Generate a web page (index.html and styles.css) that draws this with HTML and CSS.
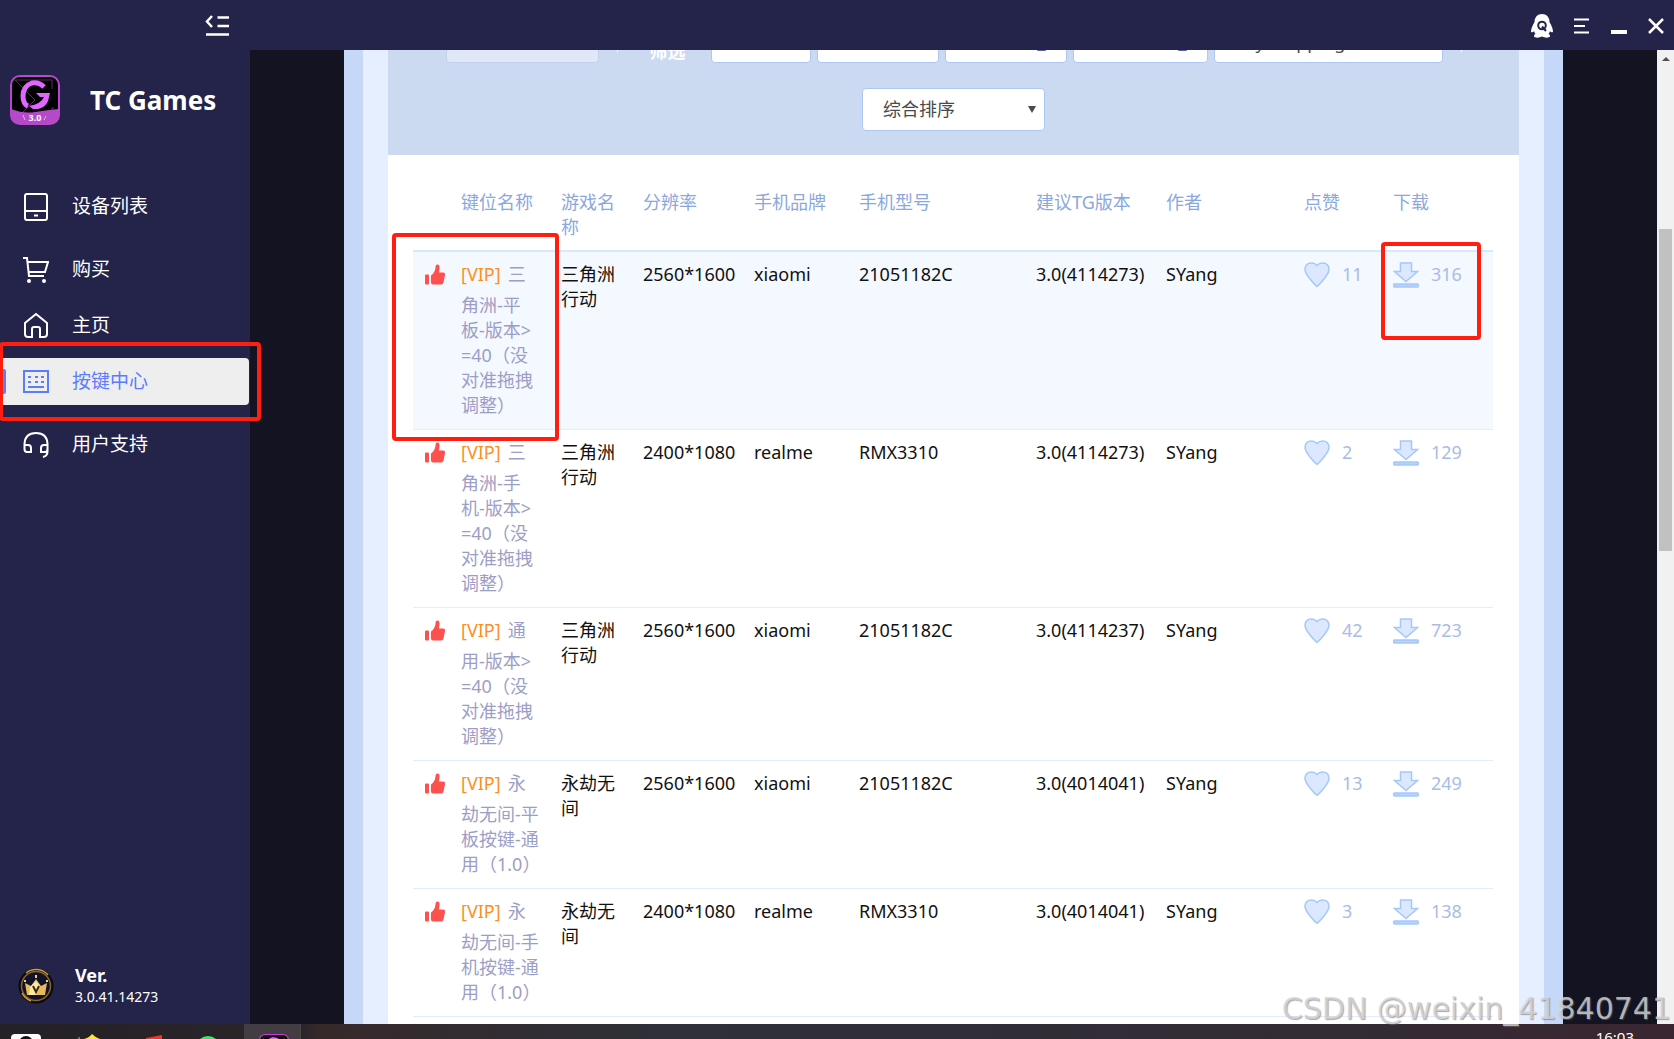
FILE: index.html
```html
<!DOCTYPE html>
<html lang="zh-CN">
<head>
    <meta charset="UTF-8">
    <meta name="viewport" content="width=device-width, initial-scale=1.0">
    <title>TC Games</title>
    <link rel="stylesheet" href="styles.css">
</head>
<body>
    <svg class="sprite" aria-hidden="true">
        <symbol id="thumb" viewBox="0 0 22 22">
            <rect x="1" y="11" width="4" height="10" rx="1"/>
            <path d="M7 12 Q11 9 11.500 4 Q11.500 1 13.500 1 Q16 1 15.500 5 L15 9 H19 Q21.500 9 21 11.500 L19.500 19 Q19 21 17 21 H9 Q7 21 7 19 Z"/>
        </symbol>
        <symbol id="heart" viewBox="0 0 26 26">
            <path d="M13 24.500 Q11 23 6 17 Q.8 10.500 1 7 Q1.500 1 7.500 1 Q11 1 13 3.500 Q15 1 18.500 1 Q24.500 1 25 7 Q25.200 10.500 20 17 Q15 23 13 24.500 Z"/>
        </symbol>
        <symbol id="download" viewBox="0 0 26 26">
            <path d="M7.500 1 H18.500 V9.500 H24.500 L13 19.500 L1.500 9.500 H7.500 Z"/>
            <rect class="tray" x=".7" y="22" width="24.600" height="3" rx="1"/>
        </symbol>
        <symbol id="logo" viewBox="0 0 50 50">
            <rect x="1" y="1" width="48" height="48" rx="9" fill="#000"/>
            <path d="M5 5 H42 V14 M5 5 L25 25 L12 38 M42 38 V33 H44" stroke="#5b2a66" fill="none"/>
            <path d="M1 34 Q14 39 25 37 Q38 35 49 34 V40 Q49 49 40 49 H10 Q1 49 1 40 Z" fill="#b44ac8"/>
            <path d="M34 12 Q29 7 22 8 Q13 11 13 21 Q13 29 18 31" fill="none" stroke="#e066ff" stroke-width="5"/>
            <path d="M40 18 H26 L30 22 H34 Q31 29 19 31 L23 34 Q37 35 39 22 Z" fill="#e066ff"/>
            <rect x="1" y="1" width="48" height="48" rx="9" fill="none" stroke="#b947cc" stroke-width="2"/>
            <text x="25" y="46" class="logo-text">3.0</text>
            <path d="M13 40 L15 45 M36 41 L34 45" stroke="#e9a5f5"/>
        </symbol>
    </svg>

    <header class="titlebar">
        <button class="icon-btn collapse" aria-label="收起菜单">
            <svg width="24" height="22" viewBox="0 0 24 22"><path d="M7 1 L2 6.500 L7 12 M12.500 2.500 H24 M12.500 11 H24 M1 19.500 H24"/></svg>
        </button>
        <div class="window-controls">
            <button class="icon-btn" aria-label="QQ">
                <svg width="22" height="24" viewBox="0 0 22 24">
                    <path class="solid" d="M11 0 Q18 0 18.500 8 Q22 14 22 18 Q20 19 19 17 Q18.500 19 17.500 20 Q20 21 18.500 23 Q15 24.500 11 22.500 Q7 24.500 3.500 23 Q2 21 4.500 20 Q3.500 19 3 17 Q2 19 0 18 Q0 14 3.500 8 Q4 0 11 0 Z"/>
                    <circle class="q" cx="11" cy="11.500" r="3.800"/><path class="q" d="M11 12.500 L15 17"/>
                </svg>
            </button>
            <button class="icon-btn" aria-label="菜单">
                <svg width="16" height="16" viewBox="0 0 16 16"><path class="thin" d="M0 1.500 H15 M0 8 H11 M0 14.500 H15"/></svg>
            </button>
            <button class="icon-btn" aria-label="最小化">
                <svg width="16" height="16" viewBox="0 0 16 16"><path class="solid" d="M0 12 H16 V16 H0 Z"/></svg>
            </button>
            <button class="icon-btn" aria-label="关闭">
                <svg width="16" height="16" viewBox="0 0 16 16"><path d="M1 1 L15 15 M15 1 L1 15"/></svg>
            </button>
        </div>
    </header>

    <div class="window">
        <aside class="sidebar">
            <div class="brand">
                <svg width="50" height="50"><use href="#logo"/></svg>
                <h1>TC Games</h1>
            </div>
            <nav class="menu">
                <a href="#" class="menu-item section-end">
                    <svg width="26" height="28" viewBox="0 0 26 28"><rect x="2" y="1" width="22" height="26" rx="2"/><path d="M2 18 H24 M11 22.500 H15"/></svg>
                    设备列表
                </a>
                <a href="#" class="menu-item">
                    <svg width="26" height="28" viewBox="0 0 26 28"><path d="M0 2 H4 L6 20 H21 M4.500 6 H25 L22 16 H6"/><circle class="dot" cx="6" cy="25" r="2"/><circle class="dot" cx="21" cy="25" r="2"/></svg>
                    购买
                </a>
                <a href="#" class="menu-item">
                    <svg width="26" height="28" viewBox="0 0 26 28"><path d="M13 2 L24 11 V22 Q24 25 21 25 H17 V17 Q17 15 15 15 H11 Q9 15 9 17 V25 H5 Q2 25 2 22 V11 Z"/></svg>
                    主页
                </a>
                <a href="#" class="menu-item active section-end">
                    <svg width="26" height="28" viewBox="0 0 26 28"><rect x="1" y="3" width="24" height="21"/><path d="M5 9 H8 M12 9 H15 M18 9 H21 M5 14 H8 M12 14 H15 M18 14 H21 M5 19 H21"/></svg>
                    按键中心
                </a>
                <a href="#" class="menu-item">
                    <svg width="26" height="28" viewBox="0 0 26 28"><path d="M1.500 16 V13 Q2 2 13 2 Q24 2 24.500 13 V19 Q25 25 20 26 M1.500 14 H5 Q8 14 8 17 V21 H4 Q1.500 21 1.500 18 Z M24.500 14 H21 Q18 14 18 17 V21 H22 Q24.500 21 24.500 18"/></svg>
                    用户支持
                </a>
            </nav>
            <div class="version">
                <svg width="36" height="36" viewBox="0 0 36 36">
                    <circle cx="18" cy="18" r="17.500" fill="#0b0a12"/>
                    <circle cx="18" cy="18" r="14.500" fill="#12122b" stroke="#8c6727" stroke-width="1.500"/>
                    <path d="M8 5 A16 16 0 0 1 30 7 M4 25 A16 16 0 0 0 13 33" fill="none" stroke="#d29b40" stroke-width="1.500"/>
                    <path d="M7 15 L13 18 L18 11 L23 18 L29 15 L27 27 H9 Z" fill="#e9b95b"/>
                    <path d="M12 19 L18 13 L22 18 L18 27 H11 Z" fill="#ffe9a3"/>
                    <path d="M15 18 L18 24 L21 18" fill="none" stroke="#3b2a16" stroke-width="2"/>
                    <path d="M7 12 V14 M18 7 V10 M29 12 V14" stroke="#f4cd72" stroke-width="2"/>
                </svg>
                <div>
                    <strong>Ver.</strong>
                    <span>3.0.41.14273</span>
                </div>
            </div>
        </aside>

        <main class="viewport">
            <div class="outer">
                <div class="inner">
                    <div class="filters">
                        <div class="filter-row">
                            <button class="field muted" disabled>通用键位选方式</button>
                            <span class="divider"></span>
                            <span class="filter-label">筛选</span>
                            <div class="filter-group">
                                <button class="field w-xs">VIP按键</button>
                                <button class="field w-sm">非VIP按键</button>
                                <button class="field w-sm spread">游戏名<i></i></button>
                                <button class="field w-md spread">手机型号<i></i></button>
                                <input class="field w-lg" type="text" value="Key mapping" aria-label="Key mapping">
                            </div>
                            <span class="divider"></span>
                        </div>
                        <div class="sort">
                            <select class="field" aria-label="排序">
                                <option>综合排序</option>
                            </select>
                        </div>
                    </div>

                    <div class="table-wrap">
                        <table class="keys">
                            <colgroup>
                                <col class="c-thumb"><col class="c-name"><col class="c-game"><col class="c-res"><col class="c-brand">
                                <col class="c-model"><col class="c-ver"><col class="c-author"><col class="c-like"><col class="c-down">
                            </colgroup>
                            <thead>
                                <tr>
                                    <th></th>
                                    <th>键位名称</th>
                                    <th>游戏名称</th>
                                    <th>分辨率</th>
                                    <th>手机品牌</th>
                                    <th>手机型号</th>
                                    <th>建议TG版本</th>
                                    <th>作者</th>
                                    <th>点赞</th>
                                    <th>下载</th>
                                </tr>
                            </thead>
                            <tbody>
                                <tr class="hover">
                                    <td><svg class="thumb"><use href="#thumb"/></svg></td>
                                    <td class="name"><span class="vip">[VIP]</span>三角洲-平板-版本&gt;=40（没对准拖拽调整）</td>
                                    <td>三角洲行动</td>
                                    <td>2560*1600</td>
                                    <td>xiaomi</td>
                                    <td>21051182C</td>
                                    <td>3.0(4114273)</td>
                                    <td>SYang</td>
                                    <td><span class="count"><svg><use href="#heart"/></svg>11</span></td>
                                    <td><span class="count"><svg><use href="#download"/></svg>316</span></td>
                                </tr>
                                <tr>
                                    <td><svg class="thumb"><use href="#thumb"/></svg></td>
                                    <td class="name"><span class="vip">[VIP]</span>三角洲-手机-版本&gt;=40（没对准拖拽调整）</td>
                                    <td>三角洲行动</td>
                                    <td>2400*1080</td>
                                    <td>realme</td>
                                    <td>RMX3310</td>
                                    <td>3.0(4114273)</td>
                                    <td>SYang</td>
                                    <td><span class="count"><svg><use href="#heart"/></svg>2</span></td>
                                    <td><span class="count"><svg><use href="#download"/></svg>129</span></td>
                                </tr>
                                <tr>
                                    <td><svg class="thumb"><use href="#thumb"/></svg></td>
                                    <td class="name"><span class="vip">[VIP]</span>通用-版本&gt;=40（没对准拖拽调整）</td>
                                    <td>三角洲行动</td>
                                    <td>2560*1600</td>
                                    <td>xiaomi</td>
                                    <td>21051182C</td>
                                    <td>3.0(4114237)</td>
                                    <td>SYang</td>
                                    <td><span class="count"><svg><use href="#heart"/></svg>42</span></td>
                                    <td><span class="count"><svg><use href="#download"/></svg>723</span></td>
                                </tr>
                                <tr>
                                    <td><svg class="thumb"><use href="#thumb"/></svg></td>
                                    <td class="name"><span class="vip">[VIP]</span>永劫无间-平板按键-通用（1.0）</td>
                                    <td>永劫无间</td>
                                    <td>2560*1600</td>
                                    <td>xiaomi</td>
                                    <td>21051182C</td>
                                    <td>3.0(4014041)</td>
                                    <td>SYang</td>
                                    <td><span class="count"><svg><use href="#heart"/></svg>13</span></td>
                                    <td><span class="count"><svg><use href="#download"/></svg>249</span></td>
                                </tr>
                                <tr>
                                    <td><svg class="thumb"><use href="#thumb"/></svg></td>
                                    <td class="name"><span class="vip">[VIP]</span>永劫无间-手机按键-通用（1.0）</td>
                                    <td>永劫无间</td>
                                    <td>2400*1080</td>
                                    <td>realme</td>
                                    <td>RMX3310</td>
                                    <td>3.0(4014041)</td>
                                    <td>SYang</td>
                                    <td><span class="count"><svg><use href="#heart"/></svg>3</span></td>
                                    <td><span class="count"><svg><use href="#download"/></svg>138</span></td>
                                </tr>
                            </tbody>
                        </table>
                    </div>
                </div>
            </div>
        </main>

        <div class="scrollbar">
            <span class="arrow"></span>
            <span class="handle"></span>
        </div>
    </div>

    <footer class="taskbar">
        <div class="apps">
            <svg width="56" height="15"><rect x="11" y="10" width="30" height="20" rx="4" fill="#fff"/><circle cx="26" cy="19" r="7" fill="#111"/></svg>
            <svg width="68" height="15"><path d="M21 14 L24 13 V15 Z" fill="#c98a1c"/><path d="M36 10 Q40 14 44 15 H28 Q33 14 36 10 Z" fill="#ffe23c"/></svg>
            <svg width="60" height="15"><path d="M22 14 L38 11 V15 H22 Z" fill="#f2332c"/></svg>
            <svg width="60" height="15"><circle cx="24" cy="24" r="12" fill="#42e36b"/></svg>
            <span class="app-active"><svg width="30" height="30"><use href="#logo"/></svg></span>
        </div>
        <time>16:03</time>
    </footer>

    <!-- highlights drawn over the window -->
    <div class="mark mark-menu"></div>
    <div class="mark mark-name"></div>
    <div class="mark mark-download"></div>
    <div class="watermark">CSDN @weixin_41840741</div>
</body>
</html>
```
FILE: styles.css
```css
* {
    box-sizing: border-box;
}

body {
    margin: 0;
    height: 100vh;
    display: flex;
    flex-direction: column;
    overflow: hidden;
    position: relative;
    background-color: #141321;
    font-family: "Noto Sans", "Noto Sans CJK SC", sans-serif;
    font-size: 18px;
    line-height: 25px;
}

button, input, select {
    font: inherit;
}

.sprite {
    position: absolute;
    width: 0;
    height: 0;
}

/* title bar */
.titlebar {
    flex: none;
    height: 50px;
    display: flex;
    align-items: center;
    justify-content: space-between;
    padding: 1px 10px 0 205px;
    background-color: #24234a;
}

.icon-btn {
    display: flex;
    padding: 0;
    border: 0;
    background: none;
    cursor: pointer;
}

.icon-btn path {
    fill: none;
    stroke: #fff;
    stroke-width: 2.5;
}

.icon-btn .thin {
    stroke-width: 2;
}

.icon-btn .solid {
    fill: #fff;
    stroke: none;
}

.icon-btn .q {
    fill: none;
    stroke: #24234a;
    stroke-width: 2;
}

.window-controls {
    display: flex;
    align-items: center;
    gap: 21px;
}

/* layout */
.window {
    flex: 1;
    min-height: 0;
    display: flex;
}

.sidebar {
    flex: none;
    width: 250px;
    display: flex;
    flex-direction: column;
    padding-top: 25px;
    background-color: #24234a;
    color: #fff;
}

.brand {
    display: flex;
    align-items: center;
    gap: 30px;
    padding-left: 10px;
}

.brand h1 {
    margin: 0;
    font-size: 26px;
    line-height: 50px;
}

.logo-text {
    fill: #fff;
    font-size: 9px;
    font-weight: bold;
    text-anchor: middle;
}

.menu {
    display: flex;
    flex-direction: column;
    gap: 9px;
    margin-top: 58px;
}

.menu-item {
    display: flex;
    align-items: center;
    gap: 23px;
    height: 47px;
    margin-right: 1px;
    padding-left: 23px;
    border-radius: 0 4px 4px 0;
    color: #fff;
    font-size: 19px;
    text-decoration: none;
}

.menu-item svg {
    fill: none;
    stroke: currentColor;
    stroke-width: 2;
}

.menu-item .dot {
    fill: currentColor;
    stroke: none;
}

.section-end {
    margin-bottom: 7px;
}

.menu-item.active {
    position: relative;
    background-color: #eee;
    color: #5b7cff;
}

.menu-item.active::before {
    content: "";
    position: absolute;
    left: 0;
    top: 11px;
    width: 6px;
    height: 25px;
    border-radius: 2px;
    background-color: #5b7cff;
}

.version {
    display: flex;
    align-items: center;
    gap: 21px;
    margin-top: auto;
    padding: 0 0 16px 18px;
}

.version strong,
.version span {
    display: block;
    line-height: 22px;
}

.version span {
    font-size: 14px;
}

.viewport {
    flex: 1;
    min-width: 0;
    padding: 0 94px;
    overflow: hidden;
}

.outer {
    min-height: 100%;
    padding: 0 19px;
    background-color: #c5d8f8;
}

.inner {
    padding: 0 25px;
    background-color: #e6efff;
}

/* filters, first row is partly scrolled out */
.filters {
    padding-bottom: 24px;
    background-color: #ccdaf1;
    overflow: hidden;
}

.filter-row {
    display: flex;
    align-items: center;
    justify-content: center;
    margin-top: -31px;
}

.field {
    height: 43px;
    padding: 0 20px;
    border: 1px solid #adc8f5;
    border-radius: 4px;
    background-color: #fff;
    color: #4a4a4a;
    text-align: left;
    white-space: nowrap;
}

.field.muted {
    width: 153px;
    padding: 0 14px;
    border-color: #c3d1ec;
    background-color: #e0e7f6;
    color: #9c9fc8;
}

.divider {
    width: 1px;
    height: 20px;
    margin: 0 0 0 18px;
    background-color: #fff;
}

.filter-label {
    margin: 20px 25px 0 32px;
    color: #fff;
    font-weight: bold;
}

.filter-group {
    display: flex;
    gap: 6px;
}

.w-xs {
    width: 100px;
}

.w-sm {
    width: 122px;
}

.w-md {
    width: 135px;
}

.w-lg {
    width: 229px;
}

.spread {
    display: flex;
    align-items: center;
    justify-content: space-between;
    padding: 0 20px 0 17px;
}

.spread i {
    width: 9px;
    height: 18px;
    border-radius: 1px;
    background-color: #5a5ea6;
}

.sort {
    position: relative;
    width: 183px;
    margin: 24px auto 0;
}

.sort .field {
    display: block;
    width: 100%;
    appearance: none;
}

.sort::after {
    content: "";
    position: absolute;
    right: 9px;
    top: 18px;
    border: 4px solid transparent;
    border-top: 7px solid #4a4a4a;
    border-bottom: 0;
}

/* table */
.table-wrap {
    padding: 25px 26px 25px 25px;
    background-color: #fff;
}

.keys {
    width: 100%;
    table-layout: fixed;
    border-collapse: separate;
    border-spacing: 0;
    color: #111;
}

.c-thumb { width: 38px; }
.c-name { width: 100px; }
.c-game { width: 82px; }
.c-res { width: 111px; }
.c-brand { width: 105px; }
.c-ver { width: 130px; }
.c-author { width: 138px; }
.c-like { width: 89px; }
.c-down { width: 110px; }

.keys th {
    padding: 10px;
    border-bottom: 2px solid #dae8fc;
    color: #8aa8dc;
    font-weight: normal;
    text-align: left;
    vertical-align: top;
}

.keys td {
    padding: 10px 10px 11px;
    border-bottom: 1px solid #e2edfd;
    vertical-align: top;
}

.keys td:first-child {
    padding-left: 11px;
    padding-right: 0;
}

.keys .hover td {
    background-color: #f4f8ff;
}

.keys .name {
    color: #9d9ec6;
    word-break: break-all;
}

.vip {
    display: inline-block;
    margin: 0 7px 6px 0;
    color: #ff8f1c;
    vertical-align: top;
}

.thumb {
    display: block;
    width: 22px;
    height: 25px;
    fill: #ff5050;
}

.count {
    display: flex;
    gap: 12px;
    color: #a9bce6;
}

.count svg {
    width: 26px;
    height: 26px;
    margin-bottom: -1px;
    fill: #dce8ff;
    stroke: #a5c8fb;
    stroke-width: 1.5;
}

.tray {
    fill: #b8d3fb;
}

/* scrollbar */
.scrollbar {
    flex: none;
    width: 17px;
    padding: 7px 2px;
    background-color: #f1f1f1;
}

.arrow {
    display: block;
    width: 0;
    margin: 0 auto;
    border: 4px solid transparent;
    border-top: 0;
    border-bottom-color: #505050;
}

.handle {
    display: block;
    height: 33.5%;
    margin-top: 168px;
    background-color: #c1c1c1;
}

/* taskbar */
.taskbar {
    flex: none;
    height: 15px;
    display: flex;
    justify-content: space-between;
    overflow: hidden;
    padding-right: 40px;
    background: linear-gradient(90deg, #242127, #2a2529 18%, #36292a 19%, #2f303a 40%, #332b36 80%, #3a2630);
    color: #fff;
}

.apps {
    display: flex;
}

.app-active {
    width: 57px;
    padding: 10px 0 0 15px;
    border-right: 1px solid #4c454d;
    background-color: #433c43;
}

.taskbar time {
    padding-top: 1px;
    font-size: 15px;
}

/* overlays */
.mark {
    position: absolute;
    border: 4px solid #ff1e10;
    border-radius: 4px;
}

.mark-menu {
    left: -1px;
    top: 342px;
    width: 262px;
    height: 79px;
}

.mark-name {
    left: 392px;
    top: 233px;
    width: 167px;
    height: 208px;
}

.mark-download {
    left: 1381px;
    top: 242px;
    width: 100px;
    height: 98px;
}

.watermark {
    position: absolute;
    right: 3px;
    bottom: 12px;
    color: rgba(215, 215, 218, 0.8);
    font-family: "DejaVu Sans", sans-serif;
    font-size: 30px;
    line-height: 36px;
    text-shadow: 1px 1px 1px rgba(110, 110, 110, 0.6);
}
```
